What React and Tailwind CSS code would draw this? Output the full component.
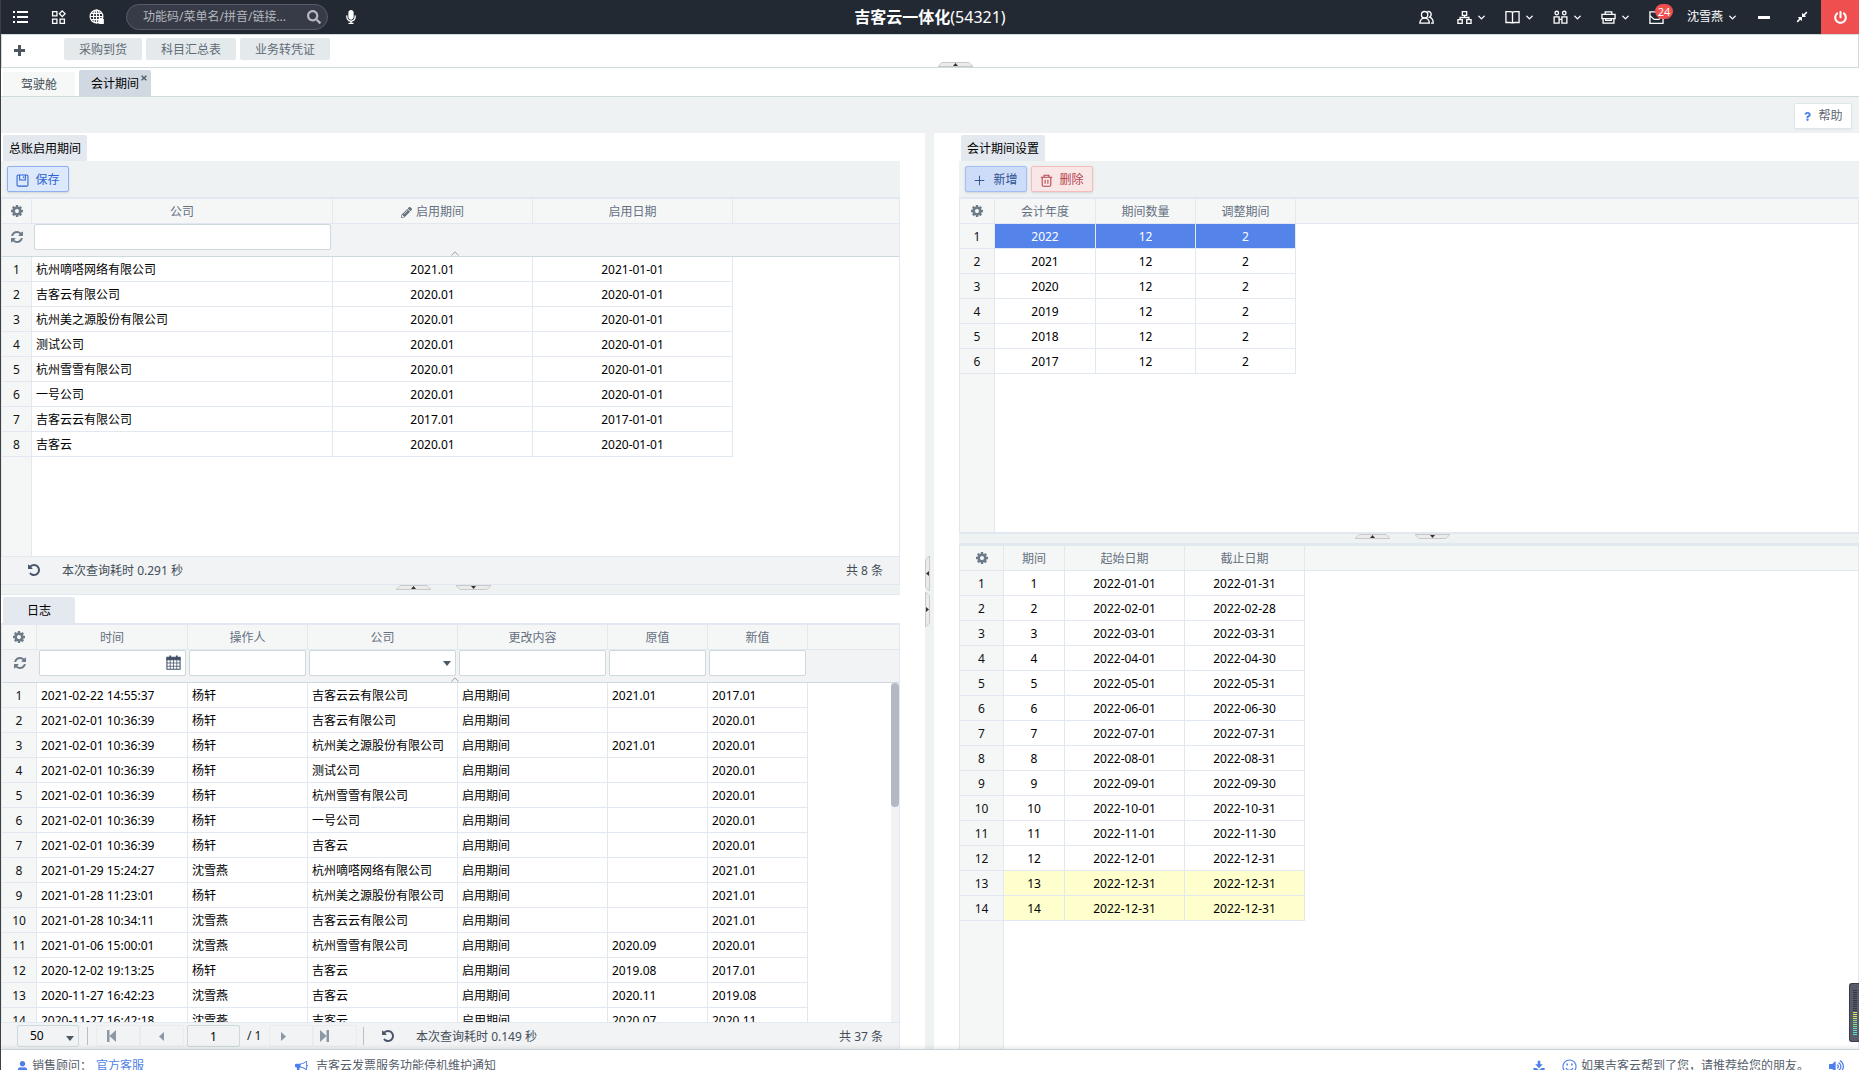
import React from "react";
import { ChevronDown, Plus } from "lucide-react";
import { FaCompressAlt, FaMicrophone, FaPencilAlt, FaPowerOff, FaQuestion, FaSearch, FaTimes, FaUser, FaVolumeUp } from "react-icons/fa";

const COG =
  "M1024 896q0-106-75-181t-181-75-181 75-75 181 75 181 181 75 181-75 75-181zm512-109v222q0 12-8 23t-20 13l-185 28q-19 54-39 91 35 50 107 138 10 12 10 25t-9 23q-27 37-99 108t-94 71q-12 0-26-9l-138-108q-44 23-91 38-16 136-29 186-7 28-36 28H657q-14 0-24.5-8.5T621 1634l-28-184q-49-16-90-37l-141 107q-10 9-25 9-14 0-25-11-126-114-165-168-7-10-7-23 0-12 8-23 15-21 51-66.5t54-70.5q-27-50-41-99L29 1041q-13-2-21-12.5T0 1005V783q0-12 8-23t19-13l186-28q14-46 39-92-40-57-107-138-10-12-10-24 0-10 9-23 26-36 98.5-107.5T337 263q13 0 26 10l138 107q44-23 91-38 16-136 29-186 7-28 36-28h222q14 0 24.5 8.5T915 158l28 184q49 16 90 37l142-107q9-9 24-9 13 0 25 10 129 119 165 170 7 8 7 22 0 12-8 23-15 21-51 66.5t-54 70.5q26 50 41 98l183 28q13 2 21 12.5t8 23.5z";
const REFRESH =
  "M1511 1056q0 5-1 7-64 268-268 434.5T764 1664q-146 0-282.5-55T238 1452l-129 129q-19 19-45 19t-45-19-19-45v-448q0-26 19-45t45-19h448q26 0 45 19t19 45-19 45l-137 137q71 66 161 102t187 36q134 0 250-65t186-179q11-17 53-117 8-23 30-23h192q13 0 22.5 9.5t9.5 22.5zm25-800v448q0 26-19 45t-45 19h-448q-26 0-45-19t-19-45 19-45l138-138Q969 384 768 384q-134 0-250 65T332 628q-11 17-53 117-8 23-30 23H50q-13 0-22.5-9.5T18 736v-7q65-268 270-434.5T768 128q146 0 284 55.5T1297 340l130-129q19-19 45-19t45 19 19 45z";
const UNDO =
  "M1536 896q0 156-61 298t-164 245-245 164-298 61q-172 0-327-72.5T177 1387q-7-10-6.5-22.5t8.5-20.5l137-138q10-9 25-9 16 2 23 12 73 95 179 147t225 52q104 0 198.5-40.5T1130 1258t109.5-163.5T1280 896t-40.5-198.5T1130 534 966.5 424.5 768 384q-98 0-188 35.5T420 521l137 138q31 30 14 69-17 40-59 40H64q-26 0-45-19T0 704V256q0-42 40-59 39-17 69 14l130 129q107-101 244.5-156.5T768 128q156 0 298 61t245 164 164 245 61 298z";

function Glyph({ d, className }) {
  return (
    <svg viewBox="0 128 1536 1536" className={className} fill="currentColor" aria-hidden="true">
      <path d={d} />
    </svg>
  );
}

function Line({ children, w = "1.4", className = "size-[15px]" }) {
  return (
    <svg viewBox="0 0 16 16" className={className} fill="none" stroke="currentColor" strokeWidth={w} aria-hidden="true">
      {children}
    </svg>
  );
}

const ListIcon = () => (
  <Line w="1.8" className="size-4">
    <path d="M5 3h11M5 8h11M5 13h11" />
    <path d="M1 3h2M1 8h2M1 13h2" />
  </Line>
);
const AppsIcon = () => (
  <Line className="size-[15px]">
    <path d="M1.7 1.7h4.6v4.6H1.7zM1.7 9.7h4.6v4.6H1.7zM9.7 9.7h4.6v4.6H9.7zM12 .9l3.1 3.1L12 7.1 8.9 4z" />
  </Line>
);
const GlobeIcon = () => (
  <Line w="1.2" className="size-4">
    <circle cx="7.5" cy="7.5" r="6.4" />
    <ellipse cx="7.5" cy="7.5" rx="3" ry="6.4" />
    <path d="M7.5 1v13M1 7.5h13M2 4.3h11M2 10.7h11" />
    <path d="M10.200 10.500q2-3 4 0v4h-4z" fill="currentColor" />
  </Line>
);
const UsersIcon = () => (
  <Line>
    <circle cx="6" cy="5" r="3.4" />
    <path d="M.9 14c.3-3.300 2-5.400 5.100-5.400s4.800 2.100 5.100 5.400zM9 1.700c3.700-.8 5.600 3.800 2.200 6 2.600.7 3.900 3 4 6.300h-2.400" />
  </Line>
);
const SitemapIcon = () => (
  <Line>
    <path d="M5.700 1.700h4.600v4H5.700zM1 10.300h4.600v4H1zM10.400 10.300H15v4h-4.600zM8 5.700V8M3.300 10.300V8h9.400v2.300" />
  </Line>
);
const BookIcon = () => (
  <Line>
    <path d="M8 3v11.500M1 1.700h4.500C7 1.700 8 2.300 8 3.300c0-1 1-1.600 2.500-1.600H15v11.600h-4.500c-1.500 0-2.500.4-2.500 1.200 0-.8-1-1.200-2.500-1.200H1z" />
  </Line>
);
const TeamIcon = () => (
  <Line>
    <circle cx="4" cy="3.200" r="1.900" />
    <circle cx="12" cy="3.200" r="1.900" />
    <path d="M1.200 14V7.300h5.300V14zM9.500 14V7.300h5.300V14zM6.500 10h3" />
  </Line>
);
const CaseIcon = () => (
  <Line>
    <path d="M4.500 4.700V2h7v2.700M1 4.700h14v4.500H1zM2.200 9.200V14h11.600V9.200M5 9.200h6v1.800H5z" />
  </Line>
);
const InboxIcon = () => (
  <Line>
    <path d="M1 2h14v12.300H1zM1 6l4.500 4h5L15 6" />
  </Line>
);
const SaveIcon = () => (
  <Line w="1.3" className="size-[13px]">
    <path d="M2.800 1.200h10.400a1.500 1.500 0 0 1 1.500 1.500v10.700a1.500 1.500 0 0 1-1.500 1.500H2.800a1.500 1.500 0 0 1-1.500-1.500V2.700a1.500 1.500 0 0 1 1.500-1.500zM4.500 1.500v6h7v-6M9.300 3v2" />
  </Line>
);
const TrashIcon = () => (
  <Line w="1.300" className="size-[13px]">
    <path d="M1 4h14M5 4V1.500h6V4M2.700 4v9.500q0 1.500 1.500 1.500h7.600q1.500 0 1.500-1.500V4M6.300 7v5M9.700 7v5" />
  </Line>
);
const CalendarIcon = () => (
  <Line w="1.100" className="size-[15px]">
    <path d="M1 2.500h14v2.500H1z" fill="currentColor" />
    <path d="M1 3v12.300h14V3" />
    <path d="M1 8.500h14M1 12h14M4.500 5v10M8 5v10M11.500 5v10" strokeWidth="0.800" />
    <path d="M4.500.5v3M11.500.5v3" strokeWidth="1.800" />
  </Line>
);
const PlusBold = () => (
  <svg viewBox="0 0 11 11" className="size-[11px]" fill="currentColor" aria-hidden="true">
    <path d="M4 0h3v4h4v3H7v4H4V7H0V4h4z" />
  </svg>
);
const Bullhorn = () => (
  <svg viewBox="0 0 1792 1792" className="size-[13px]" fill="currentColor" aria-hidden="true">
    <path d="M1664 640q53 0 90.5 37.500t37.500 90.500-37.500 90.500-90.500 37.500v384q0 52-38 90t-90 38q-417-347-812-380-58 19-91 66t-31 100.500 40 92.500q-20 33-23 65.500t6 58 33.500 55 48 50 61.500 50.500q-29 58-111.500 83t-168.500 11.500-132-55.500q-7-23-29.500-87.500t-32-94.500-23-89-15-101 3.500-98.500 22-110.500H160q-66 0-113-47T0 864V672q0-66 47-113t113-47h480q435 0 896-384 52 0 90 38t38 90v384zm-128 604V290q-394 302-768 343v270q377 42 768 341z" />
  </svg>
);
const DownloadIcon = () => (
  <svg viewBox="0 0 16 16" className="size-3" fill="currentColor" aria-hidden="true">
    <path d="M6.300 1h3.400v4.500H13L8 11 3 5.500h3.300zM.5 10.500h4L8 13.500l3.500-3h4v5H.5z" />
  </svg>
);
const SmileIcon = () => (
  <Line w="1.200" className="size-[15px]">
    <circle cx="8" cy="8" r="7" />
    <path d="M4.300 9.500c1 3.300 6.400 3.300 7.400 0" />
    <path d="M5.500 4.800v2M10.500 4.800v2" strokeWidth="1.600" />
  </Line>
);
const Caret = () => (
  <svg viewBox="0 0 8 5" className="h-[5px] w-2" aria-hidden="true">
    <path d="M0 0h8L4 5z" fill="#4d5866" />
  </svg>
);

function Handle({ dir }) {
  const down = dir === "down";
  return (
    <button type="button" aria-label={down ? "展开" : "收起"} className="block h-[5px] w-[35px]">
      <svg viewBox="0 0 35 5" className="h-[5px] w-[35px]">
        <path d={down ? "M0 .5h35L31 4.500H4z" : "M4 .5h27l4 4H0z"} fill="#ebebeb" stroke="#c9c9c9" />
        <path d={down ? "M15 1h5l-2.500 3z" : "M15 4h5l-2.500-3z"} fill="#333" />
      </svg>
    </button>
  );
}

function SideHandle({ dir }) {
  const right = dir === "right";
  return (
    <button type="button" aria-label={right ? "向右" : "向左"} className="block h-[35px] w-[5px]">
      <svg viewBox="0 0 5 35" className="h-[35px] w-[5px]">
        <path d={right ? "M.5 0v35l4-4V4z" : "M4.500 0v35l-4-4V4z"} fill="#ebebeb" stroke="#c9c9c9" />
        <path d={right ? "M1 15v5l3-2.500z" : "M4 15v5L1 17.500z"} fill="#333" />
      </svg>
    </button>
  );
}

function Splitter() {
  return (
    <div className="flex h-[9px] shrink-0 justify-center gap-[25px] bg-[#eef2f3] pr-3.5">
      <Handle dir="up" />
      <Handle dir="down" />
    </div>
  );
}

const TH = "h-[25px] border-r border-b border-[#e1e8f0] bg-[#f5f7f7] px-0 pt-0.5 pb-0 leading-[22px] text-center font-normal text-[#66707f]";
const TD = "h-[25px] border-r border-b border-[#e1e8f0] px-0 pt-0.5 pb-0 leading-[22px] whitespace-nowrap overflow-hidden";
const FIELD = "h-[26px] w-full rounded-[2px] border border-[#cdd9dc] bg-white px-1 outline-none";

function Grid({ gutter, columns, rows, filters, tone }) {
  return (
    <div className="flex min-h-0 flex-1 flex-col border-t-2 border-r border-l border-[#e1e8f0]">
      <div className="relative shrink-0">
        <table className="w-full table-fixed border-separate border-spacing-0">
          <colgroup>
            <col className={gutter} />
            {columns.map((c) => <col key={c.title} className={c.width} />)}
            <col />
          </colgroup>
          <thead>
            <tr>
              <th className="h-[25px] border-r border-b border-[#e1e8f0] bg-[#f5f7f7] p-0">
                <button type="button" aria-label="设置" className="mx-auto block">
                  <Glyph d={COG} className="size-3 text-[#6d7b88]" />
                </button>
              </th>
              {columns.map((c) => (
                <th key={c.title} scope="col" className={TH}>
                  <span className="inline-flex items-center gap-1 align-top">
                    {c.edit && <FaPencilAlt className="size-[11px]" />}
                    {c.title}
                  </span>
                </th>
              ))}
              <th className="h-[25px] border-b border-[#e1e8f0] bg-[#f5f7f7] p-0" />
            </tr>
            {filters && (
              <tr>
                <th className="h-[33px] border-b border-[#cdd9dc] bg-[#f1f3f5] p-0 pb-1.5">
                  <button type="button" aria-label="刷新" className="mx-auto block">
                    <Glyph d={REFRESH} className="size-3 text-[#6d7b88]" />
                  </button>
                </th>
                {columns.map((c, i) => (
                  <td
                    key={c.title}
                    className={"h-[33px] border-b border-[#cdd9dc] bg-[#f1f3f5] py-0 pr-0.5 align-top " + (i ? "pl-px" : "pl-0.5")}
                  >
                    {c.filter === "text" && <input aria-label={c.title} className={FIELD} />}
                    {c.filter === "date" && (
                      <div className="relative">
                        <input aria-label={c.title} className={FIELD} />
                        <button type="button" aria-label="选择日期" className="absolute top-[5px] right-[5px] text-[#3f4d66]">
                          <CalendarIcon />
                        </button>
                      </div>
                    )}
                    {c.filter === "select" && (
                      <div className="relative">
                        <select aria-label={c.title} className={FIELD + " appearance-none"} defaultValue="">
                          <option value="" />
                        </select>
                        <span className="pointer-events-none absolute top-[11px] right-[5px]"><Caret /></span>
                      </div>
                    )}
                  </td>
                ))}
                <td className="h-[33px] border-b border-[#cdd9dc] bg-[#f1f3f5] p-0" />
              </tr>
            )}
          </thead>
        </table>
        {filters && (
          <svg viewBox="0 0 8 5" className="absolute bottom-px left-1/2 h-[5px] w-2" aria-hidden="true">
            <path d="M.5 4.500L4 .8l3.500 3.700" fill="none" stroke="#9aa5ad" />
          </svg>
        )}
      </div>
      <div className="flex min-h-0 flex-1">
        <div className="flex min-w-0 flex-1 flex-col overflow-hidden">
          <table className="w-full table-fixed border-separate border-spacing-0">
            <colgroup>
              <col className={gutter} />
              {columns.map((c) => <col key={c.title} className={c.width} />)}
              <col />
            </colgroup>
            <tbody>
              {rows.map((row, i) => (
                <tr key={i} className={tone ? tone(i) : "text-black"}>
                  <th scope="row" className={TD + " bg-[#f5f7f7] text-center font-normal text-[#111]"}>{i + 1}</th>
                  {row.map((cell, j) => (
                    <td key={j} className={TD + (columns[j].left ? " pl-1 text-left" : " text-center")}>{cell}</td>
                  ))}
                  <td className="bg-white p-0" />
                </tr>
              ))}
            </tbody>
          </table>
          <div className="flex flex-1">
            <div className={gutter + " border-r border-[#e1e8f0] bg-[#f5f7f7]"} />
          </div>
        </div>
        {filters === "scroll" && (
          <div className="w-2 bg-[#f1f2f4]">
            <div className="h-[124px] rounded-full bg-[#b3b8c4]" />
          </div>
        )}
      </div>
    </div>
  );
}

const companyColumns = [
  { title: "公司", width: "w-[301px]", filter: "text", left: true },
  { title: "启用期间", width: "w-[200px]", edit: true },
  { title: "启用日期", width: "w-[200px]" },
];
const companies = [
  ["杭州嘀嗒网络有限公司", "2021.01", "2021-01-01"],
  ["吉客云有限公司", "2020.01", "2020-01-01"],
  ["杭州美之源股份有限公司", "2020.01", "2020-01-01"],
  ["测试公司", "2020.01", "2020-01-01"],
  ["杭州雪雪有限公司", "2020.01", "2020-01-01"],
  ["一号公司", "2020.01", "2020-01-01"],
  ["吉客云云有限公司", "2017.01", "2017-01-01"],
  ["吉客云", "2020.01", "2020-01-01"],
];

const logColumns = [
  { title: "时间", width: "w-[151px]", filter: "date", left: true },
  { title: "操作人", width: "w-[120px]", filter: "text", left: true },
  { title: "公司", width: "w-[150px]", filter: "select", left: true },
  { title: "更改内容", width: "w-[150px]", filter: "text", left: true },
  { title: "原值", width: "w-[100px]", filter: "text", left: true },
  { title: "新值", width: "w-[100px]", filter: "text", left: true },
];
const logs = [
  ["2021-02-22 14:55:37", "杨轩", "吉客云云有限公司", "2021.01", "2017.01"],
  ["2021-02-01 10:36:39", "杨轩", "吉客云有限公司", "", "2020.01"],
  ["2021-02-01 10:36:39", "杨轩", "杭州美之源股份有限公司", "2021.01", "2020.01"],
  ["2021-02-01 10:36:39", "杨轩", "测试公司", "", "2020.01"],
  ["2021-02-01 10:36:39", "杨轩", "杭州雪雪有限公司", "", "2020.01"],
  ["2021-02-01 10:36:39", "杨轩", "一号公司", "", "2020.01"],
  ["2021-02-01 10:36:39", "杨轩", "吉客云", "", "2020.01"],
  ["2021-01-29 15:24:27", "沈雪燕", "杭州嘀嗒网络有限公司", "", "2021.01"],
  ["2021-01-28 11:23:01", "杨轩", "杭州美之源股份有限公司", "", "2021.01"],
  ["2021-01-28 10:34:11", "沈雪燕", "吉客云云有限公司", "", "2021.01"],
  ["2021-01-06 15:00:01", "沈雪燕", "杭州雪雪有限公司", "2020.09", "2020.01"],
  ["2020-12-02 19:13:25", "杨轩", "吉客云", "2019.08", "2017.01"],
  ["2020-11-27 16:42:23", "沈雪燕", "吉客云", "2020.11", "2019.08"],
  ["2020-11-27 16:42:18", "沈雪燕", "吉客云", "2020.07", "2020.11"],
].map(([time, who, company, before, after]) => [time, who, company, "启用期间", before, after]);

const yearColumns = [
  { title: "会计年度", width: "w-[101px]" },
  { title: "期间数量", width: "w-[100px]" },
  { title: "调整期间", width: "w-[100px]" },
];
const years = ["2022", "2021", "2020", "2019", "2018", "2017"].map((y) => [y, "12", "2"]);

const periodColumns = [
  { title: "期间", width: "w-[61px]" },
  { title: "起始日期", width: "w-[120px]" },
  { title: "截止日期", width: "w-[120px]" },
];
const periods = [
  ["1", "2022-01-01", "2022-01-31"],
  ["2", "2022-02-01", "2022-02-28"],
  ["3", "2022-03-01", "2022-03-31"],
  ["4", "2022-04-01", "2022-04-30"],
  ["5", "2022-05-01", "2022-05-31"],
  ["6", "2022-06-01", "2022-06-30"],
  ["7", "2022-07-01", "2022-07-31"],
  ["8", "2022-08-01", "2022-08-31"],
  ["9", "2022-09-01", "2022-09-30"],
  ["10", "2022-10-01", "2022-10-31"],
  ["11", "2022-11-01", "2022-11-30"],
  ["12", "2022-12-01", "2022-12-31"],
  ["13", "2022-12-31", "2022-12-31"],
  ["14", "2022-12-31", "2022-12-31"],
];

function TopBar() {
  const menus = [
    ["组织", SitemapIcon],
    ["账簿", BookIcon],
    ["团队", TeamIcon],
    ["工具", CaseIcon],
  ];
  return (
    <header className="relative flex h-[34px] shrink-0 items-center bg-[#222933] text-white">
      <button type="button" aria-label="菜单" className="ml-[11px]"><ListIcon /></button>
      <button type="button" aria-label="应用" className="ml-[23px]"><AppsIcon /></button>
      <button type="button" aria-label="语言" className="ml-[23px]"><GlobeIcon /></button>
      <div className="ml-[21px] flex h-[26px] w-[202px] items-center rounded-full border border-[#565c6e] bg-[#373b47] pr-1.5 pl-4">
        <input
          aria-label="搜索"
          placeholder="功能码/菜单名/拼音/链接..."
          className="min-w-0 flex-1 bg-transparent outline-none placeholder:text-[#b4b7bd]"
        />
        <button type="button" aria-label="查找"><FaSearch className="size-[14px] text-[#b4b7bd]" /></button>
      </div>
      <button type="button" aria-label="语音" className="ml-4"><FaMicrophone className="size-[14px]" /></button>
      <h1 className="pointer-events-none absolute inset-x-0 text-center text-base leading-6">
        <span className="font-bold">吉客云一体化</span>(54321)
      </h1>
      <nav className="ml-auto flex h-full items-center">
        <button type="button" aria-label="用户" className="mr-[23px]"><UsersIcon /></button>
        {menus.map(([label, Icon]) => (
          <button key={label} type="button" aria-label={label} className="mr-[18px] flex w-[30px] items-center gap-1">
            <Icon />
            <ChevronDown className="size-[11px]" strokeWidth={3} />
          </button>
        ))}
        <button type="button" aria-label="消息" className="relative mr-[23px]">
          <InboxIcon />
          <span className="absolute -top-[6px] left-1.5 h-[15px] w-[18px] rounded-full bg-[#f04f4f] text-center text-[11px] leading-[15px]">24</span>
        </button>
        <button type="button" className="mr-5 flex items-center gap-1">
          沈雪燕
          <ChevronDown className="size-[11px]" strokeWidth={3} />
        </button>
        <button type="button" aria-label="最小化" className="mr-[26px] h-[3px] w-3 bg-white" />
        <button type="button" aria-label="还原" className="mr-[13px]"><FaCompressAlt className="size-3" /></button>
        <button type="button" aria-label="退出" className="flex h-full w-[38px] items-center justify-center bg-[#f04f4f]">
          <FaPowerOff className="size-[13px]" />
        </button>
      </nav>
    </header>
  );
}

const BTN = "flex h-[26px] w-[62px] items-center justify-center gap-1.5 rounded-[2px] border pt-0.5 shadow-sm";
const CHIP = "flex h-[22px] items-center justify-center rounded-[2px] bg-[#e4e9ec] pt-0.5 text-[#5f6b75]";
const PANEL_TAB = "mt-0.5 ml-0.5 flex h-[26px] shrink-0 items-center justify-center rounded-t-[2px] bg-[#e4e8ef] pt-0.5 text-black";
const PAGE_BTN = "flex h-[22px] w-11 items-center rounded-[2px] border border-[#e9ecef] text-[#8d97a6]";

function QueryTime({ seconds }) {
  return (
    <>
      <button type="button" aria-label="重新查询" className="text-[#4a5568]"><Glyph d={UNDO} className="size-3" /></button>
      <span className="ml-[22px] pt-0.5 text-[#444d58]">本次查询耗时 {seconds} 秒</span>
    </>
  );
}

export default function App() {
  return (
    <div className="flex h-screen flex-col overflow-hidden border-l border-[#3c4043] bg-white font-['Noto_Sans','Noto_Sans_CJK_SC',sans-serif] text-xs">
      <TopBar />
      <div className="relative flex h-[34px] shrink-0 border border-[#cfdadd] pl-3">
        <button type="button" aria-label="新增快捷入口" className="mr-[39px] pb-px text-[#4d5560]"><PlusBold /></button>
        <div className="flex gap-1 pt-[3px]">
          <a href="#purchase" className={CHIP + " w-[78px]"}>采购到货</a>
          <a href="#subjects" className={CHIP + " w-[90px]"}>科目汇总表</a>
          <a href="#voucher" className={CHIP + " w-[90px]"}>业务转凭证</a>
        </div>
        <div className="absolute inset-x-0 bottom-0 flex justify-center pl-[50px]"><Handle dir="up" /></div>
      </div>
      <div className="flex h-[29px] shrink-0 items-end gap-1 border-b border-[#cfdadd] pl-0.5">
        <button type="button" className="h-6 w-[72px] bg-[#f6f8f8] pt-0.5 text-[#444d55]">驾驶舱</button>
        <div className="relative h-[26px] w-[72px] rounded-t-[2px] bg-[#d0d8e2]">
          <button type="button" className="size-full pt-0.5 text-black">会计期间</button>
          <button type="button" aria-label="关闭" className="absolute top-1 right-[3px] text-[#55616d]"><FaTimes className="size-2" /></button>
        </div>
      </div>
      <div className="flex h-9 shrink-0 items-center justify-end bg-[#eef2f3] pr-[7px] pt-0.5">
        <button type="button" className="flex h-[26px] w-[58px] items-center justify-center gap-1.5 rounded-[2px] border border-[#dfe6e9] bg-white text-[#5f6670] shadow-xs">
          <FaQuestion className="size-[9px] text-[#4f7fe8]" />
          帮助
        </button>
      </div>

      <main className="flex min-h-0 flex-1">
        <div className="flex min-w-0 flex-[899_1_0%] flex-col">
          <section className="flex min-h-0 flex-[452_1_0%] flex-col">
            <h2 className={PANEL_TAB + " w-[84px]"}>总账启用期间</h2>
            <div className="flex h-9 shrink-0 items-center bg-[#eef2f3] pl-1.5">
              <button type="button" className={BTN + " border-[#8fb0f0] bg-[#dce8fc] text-[#2f62d0]"}><SaveIcon />保存</button>
            </div>
            <Grid gutter="w-[30px]" columns={companyColumns} rows={companies} filters="plain" />
            <footer className="flex h-[29px] shrink-0 items-center border-t border-r border-b border-[#e1e8f0] bg-[#f1f3f5] pr-4 pl-[27px]">
              <QueryTime seconds="0.291" />
              <span className="ml-auto pt-0.5 text-[#444d58]">共 8 条</span>
            </footer>
          </section>
          <Splitter />
          <section className="flex min-h-0 flex-[455_1_0%] flex-col border-t border-[#e1e8f0]">
            <h2 className={PANEL_TAB + " w-[72px]"}>日志</h2>
            <Grid gutter="w-[35px]" columns={logColumns} rows={logs} filters="scroll" />
            <footer className="flex h-[27px] shrink-0 items-center border-t border-r border-[#e1e8f0] bg-[#f1f3f5] pr-4 pl-4">
              <div className="relative">
                <select aria-label="每页条数" defaultValue="50" className="h-[22px] w-[62px] appearance-none rounded-[2px] border border-[#cdd9dc] pl-3 text-black outline-none">
                  <option>50</option>
                </select>
                <span className="pointer-events-none absolute top-[11px] right-[5px]"><Caret /></span>
              </div>
              <span className="mx-2 h-[18px] w-px bg-[#b9bfc8]" />
              <button type="button" aria-label="首页" className={PAGE_BTN + " pl-2.5"}>
                <svg viewBox="0 0 9 12" className="h-3 w-[9px]" fill="currentColor"><path d="M0 0h2.500v12H0zM9 0v12L2.500 6z" /></svg>
              </button>
              <button type="button" aria-label="上一页" className={PAGE_BTN + " pl-[18px]"}>
                <svg viewBox="0 0 5 9" className="h-[9px] w-[5px]" fill="currentColor"><path d="M5 0v9L0 4.500z" /></svg>
              </button>
              <input aria-label="页码" defaultValue="1" className="mx-[3px] h-[22px] w-[53px] rounded-[2px] border border-[#cdd9dc] text-center text-black outline-none" />
              <span className="w-[26px] pl-1 text-[#222]">/ 1</span>
              <button type="button" aria-label="下一页" className={PAGE_BTN + " pl-[11px]"}>
                <svg viewBox="0 0 5 9" className="h-[9px] w-[5px]" fill="currentColor"><path d="M0 0v9l5-4.500z" /></svg>
              </button>
              <button type="button" aria-label="末页" className={PAGE_BTN + " pl-1.5"}>
                <svg viewBox="0 0 9 12" className="h-3 w-[9px]" fill="currentColor"><path d="M6.500 0H9v12H6.500zM0 0v12l6.500-6z" /></svg>
              </button>
              <span className="mr-[18px] ml-1.5 h-[18px] w-px bg-[#b9bfc8]" />
              <QueryTime seconds="0.149" />
              <span className="ml-auto pt-0.5 text-[#444d58]">共 37 条</span>
            </footer>
          </section>
        </div>

        <div className="mx-[25px] flex w-[9px] shrink-0 flex-col justify-center gap-px bg-[#eef2f3]">
          <SideHandle dir="left" />
          <SideHandle dir="right" />
        </div>

        <div className="flex min-w-0 flex-[900_1_0%] flex-col">
          <section className="flex min-h-0 flex-[400_1_0%] flex-col border-b-2 border-[#e1e8f0]">
            <h2 className={PANEL_TAB + " w-[84px]"}>会计期间设置</h2>
            <div className="flex h-9 shrink-0 items-center gap-1 bg-[#eef2f3] pl-1.5">
              <button type="button" className={BTN + " border-[#a3bdf5] bg-[#cddcf9] text-[#2f4f8f]"}>
                <Plus className="-ml-0.5 size-[15px]" strokeWidth={1.5} />新增
              </button>
              <button type="button" className={BTN + " border-[#f5bcbc] bg-[#f9e6e6] text-[#b5434b]"}><TrashIcon />删除</button>
            </div>
            <Grid
              gutter="w-[35px]"
              columns={yearColumns}
              rows={years}
              tone={(i) => (i === 0 ? "bg-[#5484ea] text-white" : "text-black")}
            />
          </section>
          <Splitter />
          <section className="flex min-h-0 flex-[507_1_0%] flex-col border-t border-[#e1e8f0]">
            <Grid
              gutter="w-[44px]"
              columns={periodColumns}
              rows={periods}
              tone={(i) => (i > 11 ? "bg-[#feffcc] text-black" : "text-black")}
            />
          </section>
        </div>
      </main>

      <footer className="h-[21px] shrink-0 overflow-hidden border-t border-[#c9d2d6] bg-white shadow-[0_-2px_4px_rgba(0,0,0,0.08)]">
        <div className="flex h-8 items-center pr-[15px] pl-4 text-[#56606b]">
          <FaUser className="size-[11px] text-[#4f7fe8]" />
          <span className="ml-1">销售顾问：</span>
          <a href="#service" className="ml-1 text-[#4f7fe8]">官方客服</a>
          <span className="ml-[151px] text-[#4f7fe8]"><Bullhorn /></span>
          <a href="#notice" className="ml-2">吉客云发票服务功能停机维护通知</a>
          <div className="ml-auto flex items-center text-[#4f7fe8]">
            <DownloadIcon />
            <span className="ml-[17px]"><SmileIcon /></span>
            <span className="ml-1 text-[#56606b]">如果吉客云帮到了您，请推荐给您的朋友。</span>
            <button type="button" aria-label="声音" className="ml-5"><FaVolumeUp className="size-[15px]" /></button>
          </div>
        </div>
      </footer>

      <div className="fixed right-0 bottom-7 flex h-[59px] w-2.5 flex-col justify-center gap-px rounded-l-[3px] border border-r-0 border-[#3a3d47] bg-[#585c6a] pl-[3px]" aria-hidden="true">
        {Array.from({ length: 23 }, (_, i) => (
          <span
            key={i}
            className={"h-px w-1 " + (i < 11 ? "bg-[#33363f]" : i < 15 ? "bg-[#d7e85c]" : i < 19 ? "bg-[#84e08a]" : "bg-[#5fe0c4]")}
          />
        ))}
      </div>
    </div>
  );
}
